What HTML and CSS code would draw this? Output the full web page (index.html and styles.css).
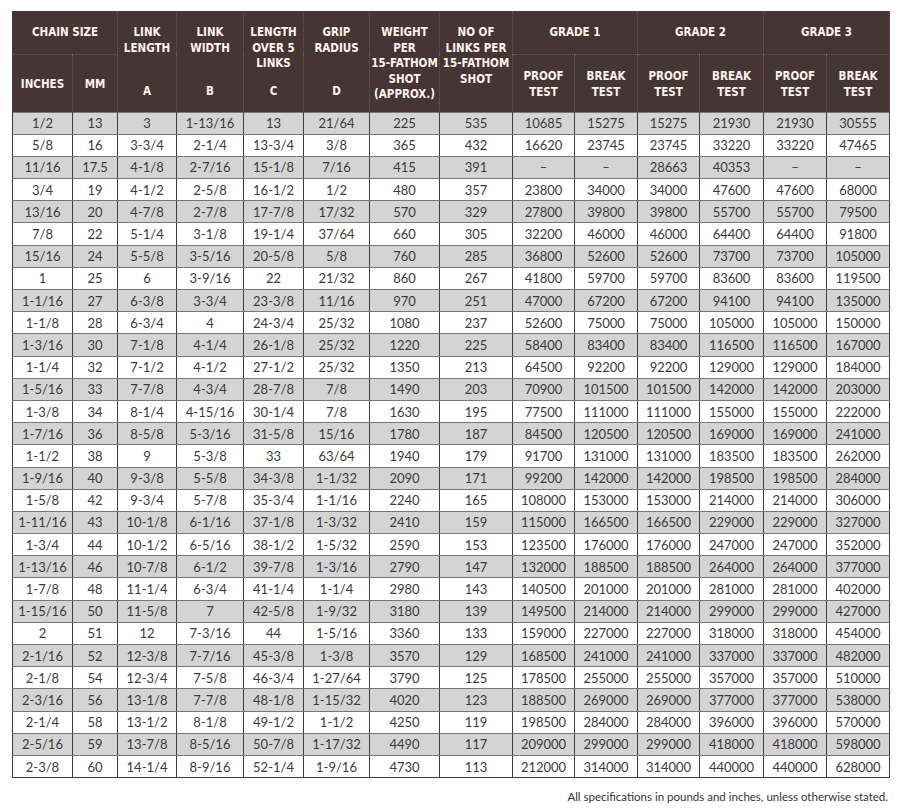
FILE: index.html
```html
<!DOCTYPE html>
<html lang="en">
<head>
<meta charset="utf-8">
<title>Chain specifications</title>
<link rel="stylesheet" href="styles.css">
</head>
<body>
<main class="page">
<table class="spec">
<colgroup>
<col class="c60"><col class="c45"><col class="c59"><col class="c67"><col class="c60"><col class="c66"><col class="c70"><col class="c73">
<col class="c62"><col class="c63"><col class="c62"><col class="c64"><col class="c63"><col class="c63">
</colgroup>
<thead>
<tr class="h1">
<th colspan="2" class="grp">CHAIN SIZE</th>
<th rowspan="2" class="tall"><div class="stack"><span>LINK<br>LENGTH</span><span class="letter">A</span></div></th>
<th rowspan="2" class="tall"><div class="stack"><span>LINK<br>WIDTH</span><span class="letter">B</span></div></th>
<th rowspan="2" class="tall"><div class="stack"><span>LENGTH<br>OVER 5<br>LINKS</span><span class="letter">C</span></div></th>
<th rowspan="2" class="tall"><div class="stack"><span>GRIP<br>RADIUS</span><span class="letter">D</span></div></th>
<th rowspan="2" class="tall"><div class="stack"><span>WEIGHT<br>PER<br>15-FATHOM<br>SHOT<br>(APPROX.)</span></div></th>
<th rowspan="2" class="tall"><div class="stack"><span>NO OF<br>LINKS PER<br>15-FATHOM<br>SHOT</span></div></th>
<th colspan="2" class="grp">GRADE 1</th>
<th colspan="2" class="grp">GRADE 2</th>
<th colspan="2" class="grp">GRADE 3</th>
</tr>
<tr class="h2">
<th>INCHES</th><th>MM</th>
<th>PROOF<br>TEST</th><th>BREAK<br>TEST</th>
<th>PROOF<br>TEST</th><th>BREAK<br>TEST</th>
<th>PROOF<br>TEST</th><th>BREAK<br>TEST</th>
</tr>
</thead>
<tbody id="rows"></tbody>
</table>
<p class="note">All specifications in pounds and inches, unless otherwise stated.</p>
</main>
<script src="app.js"></script>
</body>
</html>
```

FILE: app.js
```js
const data = `1/2,13,3,1-13/16,13,21/64,225,535,10685,15275,15275,21930,21930,30555
5/8,16,3-3/4,2-1/4,13-3/4,3/8,365,432,16620,23745,23745,33220,33220,47465
11/16,17.5,4-1/8,2-7/16,15-1/8,7/16,415,391,–,–,28663,40353,–,–
3/4,19,4-1/2,2-5/8,16-1/2,1/2,480,357,23800,34000,34000,47600,47600,68000
13/16,20,4-7/8,2-7/8,17-7/8,17/32,570,329,27800,39800,39800,55700,55700,79500
7/8,22,5-1/4,3-1/8,19-1/4,37/64,660,305,32200,46000,46000,64400,64400,91800
15/16,24,5-5/8,3-5/16,20-5/8,5/8,760,285,36800,52600,52600,73700,73700,105000
1,25,6,3-9/16,22,21/32,860,267,41800,59700,59700,83600,83600,119500
1-1/16,27,6-3/8,3-3/4,23-3/8,11/16,970,251,47000,67200,67200,94100,94100,135000
1-1/8,28,6-3/4,4,24-3/4,25/32,1080,237,52600,75000,75000,105000,105000,150000
1-3/16,30,7-1/8,4-1/4,26-1/8,25/32,1220,225,58400,83400,83400,116500,116500,167000
1-1/4,32,7-1/2,4-1/2,27-1/2,25/32,1350,213,64500,92200,92200,129000,129000,184000
1-5/16,33,7-7/8,4-3/4,28-7/8,7/8,1490,203,70900,101500,101500,142000,142000,203000
1-3/8,34,8-1/4,4-15/16,30-1/4,7/8,1630,195,77500,111000,111000,155000,155000,222000
1-7/16,36,8-5/8,5-3/16,31-5/8,15/16,1780,187,84500,120500,120500,169000,169000,241000
1-1/2,38,9,5-3/8,33,63/64,1940,179,91700,131000,131000,183500,183500,262000
1-9/16,40,9-3/8,5-5/8,34-3/8,1-1/32,2090,171,99200,142000,142000,198500,198500,284000
1-5/8,42,9-3/4,5-7/8,35-3/4,1-1/16,2240,165,108000,153000,153000,214000,214000,306000
1-11/16,43,10-1/8,6-1/16,37-1/8,1-3/32,2410,159,115000,166500,166500,229000,229000,327000
1-3/4,44,10-1/2,6-5/16,38-1/2,1-5/32,2590,153,123500,176000,176000,247000,247000,352000
1-13/16,46,10-7/8,6-1/2,39-7/8,1-3/16,2790,147,132000,188500,188500,264000,264000,377000
1-7/8,48,11-1/4,6-3/4,41-1/4,1-1/4,2980,143,140500,201000,201000,281000,281000,402000
1-15/16,50,11-5/8,7,42-5/8,1-9/32,3180,139,149500,214000,214000,299000,299000,427000
2,51,12,7-3/16,44,1-5/16,3360,133,159000,227000,227000,318000,318000,454000
2-1/16,52,12-3/8,7-7/16,45-3/8,1-3/8,3570,129,168500,241000,241000,337000,337000,482000
2-1/8,54,12-3/4,7-5/8,46-3/4,1-27/64,3790,125,178500,255000,255000,357000,357000,510000
2-3/16,56,13-1/8,7-7/8,48-1/8,1-15/32,4020,123,188500,269000,269000,377000,377000,538000
2-1/4,58,13-1/2,8-1/8,49-1/2,1-1/2,4250,119,198500,284000,284000,396000,396000,570000
2-5/16,59,13-7/8,8-5/16,50-7/8,1-17/32,4490,117,209000,299000,299000,418000,418000,598000
2-3/8,60,14-1/4,8-9/16,52-1/4,1-9/16,4730,113,212000,314000,314000,440000,440000,628000`;
const tbody = document.getElementById('rows');
data.split('\n').forEach((line, i) => {
  const tr = document.createElement('tr');
  if (i % 2 === 0) tr.className = 'shade';
  line.split(',').forEach(v => {
    const td = document.createElement('td');
    td.textContent = v;
    tr.appendChild(td);
  });
  tbody.appendChild(tr);
});
```

FILE: styles.css
```css
html, body { margin: 0; padding: 0; background: #fff; }
.page { padding: 11px 11px 0 12px; }
.spec {
  border-collapse: collapse;
  table-layout: fixed;
  width: 877px;
  font-family: Lato, "Open Sans", sans-serif;
}
.c60 { width: 60px; } .c45 { width: 45px; } .c59 { width: 59px; } .c67 { width: 67px; }
.c66 { width: 66px; } .c70 { width: 70px; } .c73 { width: 73px; } .c62 { width: 62px; }
.c63 { width: 63px; } .c64 { width: 64px; }
.spec thead th {
  background: #453535;
  color: #fff3ee;
  font-family: "DejaVu Sans Condensed", "DejaVu Sans", sans-serif;
  font-stretch: condensed;
  font-weight: bold;
  font-size: 11.5px;
  line-height: 15.5px;
  letter-spacing: 0;
  white-space: nowrap;
  text-align: center;
  padding: 0;
  border-left: 1px dotted #6e5c5c;
  border-right: 1px dotted #6e5c5c;
}
.spec thead th:first-child { border-left: 1px solid #453535; }
.spec .h1 { height: 43px; }
.spec .h2 { height: 58px; }
.spec .h1 .grp { vertical-align: middle; border-bottom: 1px dotted #6e5c5c; }
.spec .h2 th { vertical-align: middle; padding-top: 3px; }
.spec .tall { vertical-align: top; padding-top: 14px; }
.stack { display: flex; flex-direction: column; align-items: center; height: 74px; }
.letter { margin-top: auto; }
.spec tbody tr { height: 22.2px; }
.spec tbody td {
  padding: 0;
  text-align: center;
  vertical-align: middle;
  font-size: 13px;
  color: #3a3a3a;
  border-top: 1px solid #777;
  border-bottom: 1px solid #777;
  border-left: 1px solid #3d3d3d;
  border-right: 1px solid #3d3d3d;
}
.spec tbody tr.shade td { background: #d4d4d4; }
.spec tbody tr:last-child td { border-bottom: 1px solid #3d3d3d; }
.note {
  margin: 12px 1px 0 0;
  text-align: right;
  font-family: Lato, "Open Sans", sans-serif;
  font-size: 11.5px;
  color: #333;
}
```
